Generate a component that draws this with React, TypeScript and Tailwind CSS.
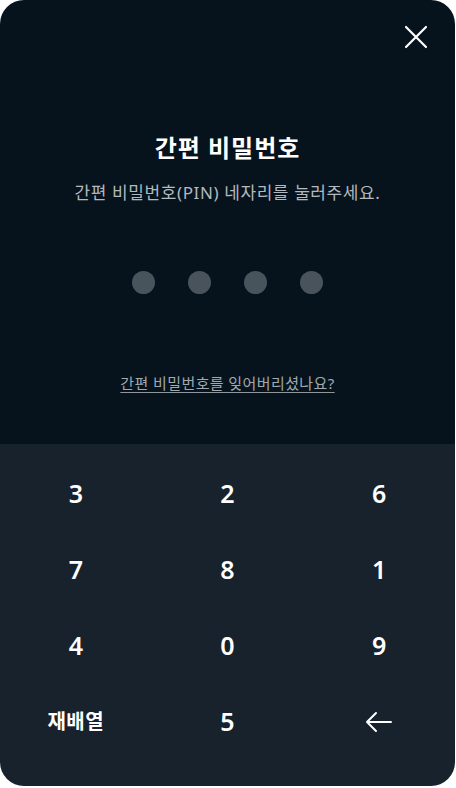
const keys = ["3", "2", "6", "7", "8", "1", "4", "0", "9", "재배열", "5", "back"];

export default function App() {
  return (
    <div className="w-[456px] h-[788px] bg-white pr-px pb-[2px]" style={{ fontFamily: '"Noto Sans", "Noto Sans CJK KR", sans-serif' }}>
      <div className="w-full h-full rounded-[24px] overflow-hidden flex flex-col">
        {/* top */}
        <div className="h-[444px] bg-[#06131d] flex flex-col items-center relative">
          <button className="absolute right-[27px] top-[25px]" aria-label="닫기">
            <svg width="24" height="24" viewBox="0 0 24 24" fill="none" stroke="white" strokeWidth="2.2" strokeLinecap="round">
              <path d="M2 2l20 20M22 2L2 22" />
            </svg>
          </button>
          <h1 className="mt-[129px] text-[24px] leading-[38px] font-bold tracking-[1px] text-white">간편 비밀번호</h1>
          <p className="mt-[13px] text-[17px] leading-[26px] tracking-[0.6px] text-[#b3b9be]">간편 비밀번호(PIN) 네자리를 눌러주세요.</p>
          <div className="mt-[65px] flex gap-[33px]">
            {[0, 1, 2, 3].map((i) => (
              <span key={i} className="w-[23px] h-[23px] rounded-full bg-[#48535c]" />
            ))}
          </div>
          <a className="mt-[77px] text-[15px] leading-[24px] tracking-[0.4px] text-[#a1a8ae] underline underline-offset-[3px] decoration-[#8f979e]">
            간편 비밀번호를 잊어버리셨나요?
          </a>
        </div>
        {/* keypad */}
        <div className="flex-1 bg-[#17222c] pt-[12px] grid grid-cols-3 auto-rows-[76px]">
          {keys.map((k) => (
            <button key={k} className="flex items-center justify-center text-white">
              {k === "back" ? (
                <svg width="30" height="24" viewBox="0 0 30 24" fill="none" stroke="white" strokeWidth="2" strokeLinecap="round" strokeLinejoin="round">
                  <path d="M27 12H3M12 3L3 12l9 9" />
                </svg>
              ) : k === "재배열" ? (
                <span className="text-[20px] font-bold tracking-[0.5px]">{k}</span>
              ) : (
                <span className="text-[25px] font-semibold">{k}</span>
              )}
            </button>
          ))}
        </div>
      </div>
    </div>
  );
}
